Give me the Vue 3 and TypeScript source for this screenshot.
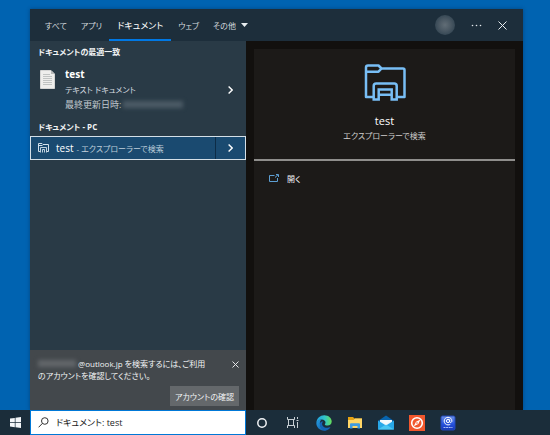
<script setup lang="ts">
import { ref } from 'vue'

const tabs = ['すべて', 'アプリ', 'ドキュメント', 'ウェブ']
const active = ref('ドキュメント')
const query = ref('ドキュメント: test')
</script>

<template>
  <div class="desktop">
    <main class="panel">
      <header class="top">
        <nav class="tabs">
          <button v-for="t in tabs" :key="t" class="tab" :class="{ active: t === active }" @click="active = t">{{ t }}</button>
          <button class="tab more">その他
            <svg width="7" height="4" viewBox="0 0 7 4"><path d="M0 0h7L3.500 4z" fill="#e8edf0" /></svg>
          </button>
        </nav>
        <div class="tools">
          <button class="avatar" aria-label="アカウント"></button>
          <button class="tool" aria-label="オプション">
            <svg width="11" height="3" viewBox="0 0 11 3" fill="#e4e9ec"><circle cx="1.500" cy="1.500" r=".8" /><circle cx="5.500" cy="1.500" r=".8" /><circle cx="9.500" cy="1.500" r=".8" /></svg>
          </button>
          <button class="tool" aria-label="閉じる">
            <svg width="9" height="9" viewBox="0 0 9 9" fill="none" stroke="#e8edf0" stroke-width="1"><path d="M.5.5l8 8M8.500.5l-8 8" /></svg>
          </button>
        </div>
      </header>

      <div class="body">
        <section class="results">
          <h2 class="group">ドキュメントの最適一致</h2>
          <div class="best">
            <svg class="file" width="15" height="19" viewBox="0 0 15 19">
              <path d="M.5.5h10.500l3.500 3.500v14.500H.5z" fill="#eeeeec" stroke="#d4d5d4" />
              <path d="M11 .5V4h3.500z" fill="#b7b9b9" />
              <path d="M3 4.500h7M3 6.500h9M3 8.500h9M3 10.500h9M3 12.500h9M3 14.500h9" stroke="#b4b7b8" stroke-width=".8" />
            </svg>
            <div class="lines">
              <strong class="name">test</strong>
              <span>テキスト ドキュメント</span>
              <span class="date">最終更新日時:<i class="smudge"></i></span>
            </div>
            <button class="go" aria-label="詳細">
              <svg width="5" height="8" viewBox="0 0 5 8" fill="none" stroke="#fff" stroke-width="1.400"><path d="M.6.5L4.200 4 .6 7.500" /></svg>
            </button>
          </div>
          <h2 class="group second">ドキュメント - PC</h2>
          <div class="hit">
            <button class="hit-main">
              <svg width="11" height="10" viewBox="0 0 11 10" fill="none" stroke="#d3e0ea">
                <path d="M.5 8.500v-8h3.500l1 1h5.500v7H9M.5 8.500H2M.5 2.500h4" />
                <path d="M2.500 9.500v-5h6v5M4.500 9.500v-3h2v3" stroke-width=".9" />
              </svg>
              <span class="hit-name">test</span><span class="hit-sub">- エクスプローラーで検索</span>
            </button>
            <button class="hit-go" aria-label="詳細">
              <svg width="5" height="8" viewBox="0 0 5 8" fill="none" stroke="#fff" stroke-width="1.400"><path d="M.6.5L4.200 4 .6 7.500" /></svg>
            </button>
          </div>

          <aside class="notice">
            <div class="notice-row">
              <p><i class="smudge mail"></i>@outlook.jp を検索するには、ご利用<br />のアカウントを確認してください。</p>
              <button class="dismiss" aria-label="閉じる">
                <svg width="7" height="7" viewBox="0 0 7 7" fill="none" stroke="#e4e6e7"><path d="M.5.5l6 6M6.500.5l-6 6" /></svg>
              </button>
            </div>
            <button class="verify">アカウントの確認</button>
          </aside>
        </section>

        <section class="preview">
          <div class="card">
            <div class="hero">
              <svg width="42" height="37" viewBox="0 0 42 37" fill="none" stroke="#78bef5" stroke-width="2.500" stroke-linejoin="round">
                <path d="M9 33H2V3.500q0-2 2-2h10.500L17.500 4.500H39q1.500 0 1.500 1.500V33H33" />
                <path d="M2 7.700h12.500l3-3.200" />
                <path d="M9.700 35.500V22q0-2.500 2.500-2.500h18q2.500 0 2.500 2.500v13.500h-5v-10H14.700v10zM14.700 30.700h13" stroke-linejoin="miter" />
              </svg>
              <h1>test</h1>
              <p>エクスプローラーで検索</p>
            </div>
            <button class="open">
              <svg width="10" height="9" viewBox="0 0 10 9" fill="none" stroke="#5d9fd3">
                <path d="M5.500 1.500h-5v6h8V4" /><path d="M6 3.500L9 .8M7 .5h2.500V3" />
              </svg>
              開く
            </button>
          </div>
        </section>
      </div>
    </main>

    <footer class="taskbar">
      <button class="start" aria-label="スタート">
        <svg width="11" height="11" viewBox="0 0 11 11" fill="#f4f7f9"><path d="M0 1.600L4.800.9v4.300H0zM5.500.8L11 0v5.200H5.500zM0 5.900h4.800v4.300L0 9.500zM5.500 5.900H11V11l-5.500-.8z" /></svg>
      </button>
      <label class="search">
        <svg width="11" height="11" viewBox="0 0 11 11" fill="none" stroke="#333" stroke-width="1"><circle cx="6.800" cy="4" r="3.300" /><path d="M4.400 6.400L.6 10.300" /></svg>
        <input v-model="query" type="text" aria-label="検索" />
      </label>
      <button class="app" aria-label="Cortana">
        <svg width="12" height="12" viewBox="0 0 12 12"><circle cx="6" cy="6" r="4.200" fill="none" stroke="#f0f3f5" stroke-width="1.500" /></svg>
      </button>
      <button class="app" aria-label="タスク ビュー">
        <svg width="12" height="11" viewBox="0 0 12 11" fill="none" stroke="#c8d0d5">
          <path d="M.5 0v2.500h7V0M.5 11V8.500h7V11M1.500 2.500v6M6.500 2.500v6M10.500 0v2M10.500 5v6" /><path d="M9.500 3.500h2" />
        </svg>
      </button>
      <button class="app" aria-label="Edge">
        <svg width="16" height="16" viewBox="0 0 16 16">
          <defs>
            <linearGradient id="edge-top" x1="0" y1="0" x2="1" y2="0"><stop offset="0" stop-color="#209fdf" /><stop offset=".55" stop-color="#32c6c9" /><stop offset="1" stop-color="#66df57" /></linearGradient>
            <linearGradient id="edge-low" x1="0" y1="0" x2="1" y2="1"><stop offset="0" stop-color="#249ee3" /><stop offset="1" stop-color="#1257a5" /></linearGradient>
          </defs>
          <path d="M.4 7.600C.8 3.200 4.100.3 8.200.3c4.500 0 7.500 3 7.500 6.300 0 2.500-1.900 4-4.100 4-1.800 0-2.800-.7-2.800-1.300 0-.5.7-.8.7-1.900 0-1.500-1.500-2.900-3.700-2.900-2.700 0-4.700 1.400-5.400 3.100z" fill="url(#edge-top)" />
          <path d="M.4 7.600C1.200 5.500 3.200 4.300 5.800 4.500 4.500 5.200 3.700 6.800 3.900 8.800c.3 3.600 3.200 6.200 6.500 6.600-5.800 1.500-10.500-2.800-10-7.800z" fill="url(#edge-low)" />
          <path d="M7.200 6.600c-1.300 1-1.500 2.900-.4 4.300 1.600 2.100 5 2.500 7.700 1.100-1.100 2.200-3.500 3.800-5.500 3.500-3-.4-5.200-3.400-5.100-6.500.1-1.800 1.400-3.100 3.300-2.400z" fill="#1464b5" />
        </svg>
      </button>
      <button class="app" aria-label="エクスプローラー">
        <svg width="16" height="14" viewBox="0 0 16 14">
          <path d="M1 1h5l1.500 1.500H15V6H1z" fill="#e6a313" /><path d="M1 4h5.500L8 2.500h7V12H1z" fill="#ffd766" />
          <path d="M3 12.500V8.300Q3 7.300 4 7.300h8q1 0 1 1v4.200h-2.500V10h-5v2.500z" fill="#3f9ce0" />
        </svg>
      </button>
      <button class="app" aria-label="メール">
        <svg width="16" height="15" viewBox="0 0 16 15">
          <path d="M0 6L8 .5 16 6v8H0z" fill="#0864ae" /><path d="M2 5h12v5H2z" fill="#eaf5fb" />
          <path d="M0 5.500l8 5 8-5V14.500H0z" fill="#28a8e8" /><path d="M0 14.500L8 9.500l8 5z" fill="#49c6f3" /><path d="M2 5h12L8 9.700z" fill="#f4fafd" />
        </svg>
      </button>
      <button class="app" aria-label="コンパス">
        <svg width="16" height="16" viewBox="0 0 16 16">
          <rect width="16" height="16" fill="#f1572d" /><circle cx="8" cy="8" r="5.300" fill="none" stroke="#fff" stroke-width="1.600" />
          <path d="M11.500 4.500L9.300 9 4.800 11.300 7 6.800z" fill="#fff" /><circle cx="8" cy="8" r=".8" fill="#f1572d" />
        </svg>
      </button>
      <button class="app" aria-label="メール アカウント">
        <svg width="16" height="16" viewBox="0 0 16 16">
          <defs><linearGradient id="at-bg" x1="0" y1="0" x2="0" y2="1"><stop offset="0" stop-color="#6990e8" /><stop offset=".6" stop-color="#2450dc" /><stop offset="1" stop-color="#1535b4" /></linearGradient></defs>
          <rect x="1" y="1" width="14" height="14" rx="1.500" fill="url(#at-bg)" stroke="#2349b8" />
          <g fill="none" stroke="#fff" stroke-width="1"><circle cx="8" cy="6" r="1.600" /><path d="M9.700 4.300v2.300c0 1.400 2.200 1.100 2.200-.6C11.900 3.800 10.200 2.300 8 2.300S4.200 4 4.200 6.100 5.800 9.900 8 9.900c.9 0 1.700-.2 2.300-.6" /></g>
          <path d="M3.500 12.500h9" stroke="#a8bdf5" stroke-dasharray="2 .6" />
        </svg>
      </button>
    </footer>
  </div>
</template>

<style>
body {
  margin: 0;
}
</style>

<style scoped>
.desktop {
  display: flex;
  flex-direction: column;
  box-sizing: border-box;
  min-height: 100vh;
  padding-top: 9px;
  background: #0063b1;
  color: #f2f4f5;
  font-family: "Open Sans", "Noto Sans CJK JP", sans-serif;
  font-size: 8px;
  line-height: 15px;
  font-feature-settings: "palt";
}
button {
  display: flex;
  align-items: center;
  justify-content: center;
  padding: 0;
  border: 0;
  background: none;
  color: inherit;
  font: inherit;
  font-feature-settings: inherit;
  white-space: nowrap;
}
h1, h2, p {
  margin: 0;
}
svg {
  flex: none;
}
.panel {
  flex: 1;
  display: flex;
  flex-direction: column;
  margin: 0 27px 0 30px;
  box-shadow: 0 0 4px rgba(0, 25, 60, 0.4);
}
.top {
  display: flex;
  justify-content: space-between;
  height: 32px;
  background: #1d2e3b;
}
.tabs {
  display: flex;
  padding-left: 8px;
}
.tab {
  box-sizing: border-box;
  padding: 0 7px;
  border-top: 2px solid transparent;
  border-bottom: 2px solid transparent;
  color: #d5dbdf;
}
.tab.active {
  padding: 0 8px;
  border-bottom-color: #0078e4;
  color: #fff;
  font-size: 9px;
}
.more {
  gap: 5px;
}
.tools {
  display: flex;
  align-items: center;
  gap: 16px;
  padding-right: 16px;
}
.avatar {
  width: 20px;
  height: 20px;
  border-radius: 50%;
  background: radial-gradient(circle, #616d76 0, #4b5964 40%, #344653 75%);
}
.tool {
  height: 20px;
}
.body {
  flex: 1;
  display: flex;
}
.results {
  flex: none;
  display: flex;
  flex-direction: column;
  width: 216px;
  background: #293a46;
}
.group {
  padding: 3px 8px 4px;
  font-size: 8px;
  font-weight: 700;
}
.best {
  display: flex;
  padding: 4px 0 5px 10px;
}
.file {
  margin-top: 3px;
}
.lines {
  flex: 1;
  display: flex;
  flex-direction: column;
  padding-left: 10px;
  color: #d8dde0;
}
.name {
  color: #fff;
  font-size: 10px;
}
.date {
  display: flex;
  align-items: center;
  color: #c0c8cd;
  font-size: 9px;
}
.smudge {
  display: inline-block;
  width: 60px;
  height: 7px;
  margin-left: 2px;
  background: #4c5b66;
  filter: blur(2px);
}
.go {
  width: 32px;
}
.second {
  padding: 2px 8px;
}
.hit {
  display: flex;
  box-sizing: border-box;
  height: 24px;
  border: 1px solid #d4dfe7;
  background: #1a4a70;
}
.hit-main {
  flex: 1;
  justify-content: flex-start;
  padding-left: 7px;
}
.hit-name {
  padding: 0 3px 0 7px;
  color: #fff;
  font-size: 10px;
}
.hit-sub {
  color: #bfcfdb;
}
.hit-go {
  width: 30px;
  border-left: 1px solid #0d2c46;
}
.notice {
  display: flex;
  flex-direction: column;
  align-items: flex-end;
  gap: 4px;
  margin-top: auto;
  padding: 8px 7px 4px 8px;
  background: #43484c;
}
.notice-row {
  display: flex;
  align-items: flex-start;
  justify-content: space-between;
  align-self: stretch;
  line-height: 12px;
  white-space: nowrap;
}
.mail {
  width: 38px;
  margin: 0 2px 0 0;
  background: #62666a;
}
.dismiss {
  height: 12px;
}
.verify {
  height: 20px;
  padding: 0 5px;
  background: #64686b;
}
.preview {
  flex: 1;
  display: flex;
  padding: 8px 8px 0;
  background: #12100e;
}
.card {
  flex: 1;
  background: #1c1a18;
}
.hero {
  display: flex;
  flex-direction: column;
  align-items: center;
  padding: 15px 0 16px;
  border-bottom: 2px solid #8f8e8c;
}
.hero h1 {
  padding-top: 11px;
  color: #fff;
  font-size: 11px;
  font-weight: 400;
  line-height: 17px;
}
.hero p {
  color: #d0cfce;
  line-height: 14px;
}
.open {
  gap: 8px;
  padding: 10px 15px;
}
.taskbar {
  display: flex;
  height: 25px;
  background: #1b2d3a;
}
.start {
  width: 30px;
}
.search {
  display: flex;
  align-items: center;
  gap: 7px;
  box-sizing: border-box;
  width: 216px;
  padding: 0 7px;
  border: 1px solid #0078d7;
  background: #fff;
}
.search input {
  flex: 1;
  min-width: 0;
  padding: 0;
  border: 0;
  outline: 0;
  background: none;
  color: #1c1c1c;
  font: inherit;
  font-size: 9px;
  font-feature-settings: inherit;
}
.app {
  width: 31px;
}
</style>
